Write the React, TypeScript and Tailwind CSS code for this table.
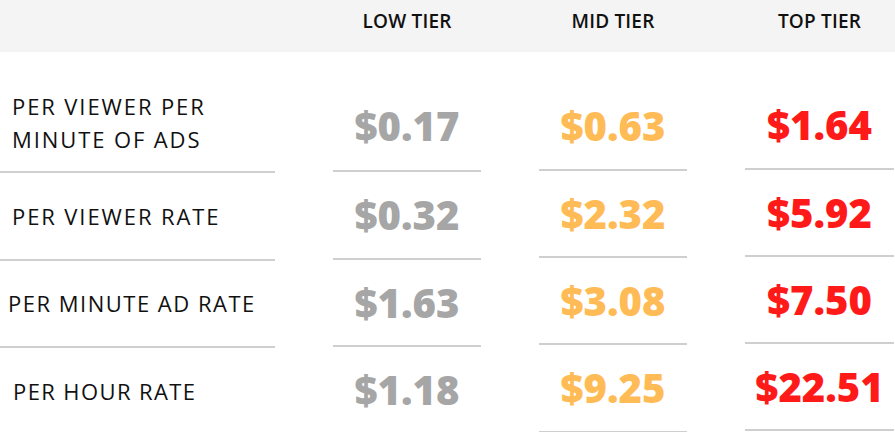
const TIERS = [
  {
    name: 'LOW TIER',
    color: 'text-[#a6a6a6]',
    values: ['$0.17', '$0.32', '$1.63', '$1.18'],
    heights: ['h-[120px]', 'h-[88px]', 'h-[87px]', 'h-[88px]'],
  },
  {
    name: 'MID TIER',
    color: 'text-[#ffbb55]',
    values: ['$0.63', '$2.32', '$3.08', '$9.25'],
    heights: ['h-[119px]', 'h-[87px]', 'h-[87px]', 'h-[88px]'],
  },
  {
    name: 'TOP TIER',
    color: 'text-[#ff1a1a]',
    values: ['$1.64', '$5.92', '$7.50', '$22.51'],
    heights: ['h-[118px]', 'h-[87px]', 'h-[87px]', 'h-[87px]'],
  },
];

const LABELS = [
  { text: ['PER VIEWER PER', 'MINUTE OF ADS'], h: 'h-[121px]', cls: 'justify-start pl-[12px] pt-[38px] tracking-[1.9px]' },
  { text: ['PER VIEWER RATE'], h: 'h-[88px]', cls: 'justify-center pl-[12px] tracking-[1.9px]' },
  { text: ['PER MINUTE AD RATE'], h: 'h-[87px]', cls: 'justify-center pl-[8px] tracking-[1.5px]' },
  { text: ['PER HOUR RATE'], h: 'h-[88px]', cls: 'justify-center pl-[13px] tracking-[1.4px]' },
];

export default function App() {
  return (
    <div className="w-[895px] h-[432px] overflow-hidden bg-white font-['Open_Sans',sans-serif]">
      {/* Header */}
      <div className="h-[52px] bg-[#f4f4f4] grid grid-cols-[275px_148px_148px_149px] gap-x-[58px]">
        <div />
        {TIERS.map((t) => (
          <div key={t.name} className="pt-[10px] text-center text-[19px] font-semibold text-[#111] tracking-[0.2px] leading-[22px]">
            {t.name}
          </div>
        ))}
      </div>

      {/* Body */}
      <div className="grid grid-cols-[275px_148px_148px_149px] gap-x-[58px]">
        <div className="flex flex-col">
          {LABELS.map((l, i) => (
            <div
              key={i}
              className={`${l.h} shrink-0 flex flex-col ${l.cls} border-b-2 border-[#cfcfcf] text-[22px] leading-[33px] text-[#111]`}
            >
              {l.text.map((line) => (
                <div key={line}>{line}</div>
              ))}
            </div>
          ))}
        </div>
        {TIERS.map((t) => (
          <div key={t.name} className="flex flex-col">
            {t.values.map((v, i) => (
              <div
                key={v}
                className={`${t.heights[i]} shrink-0 flex items-center justify-center ${i === 0 ? 'pt-[30px]' : ''} border-b-2 border-[#cfcfcf]`}
              >
                <span className={`text-[40px] font-extrabold leading-none ${t.color}`}>{v}</span>
              </div>
            ))}
          </div>
        ))}
      </div>
    </div>
  );
}
